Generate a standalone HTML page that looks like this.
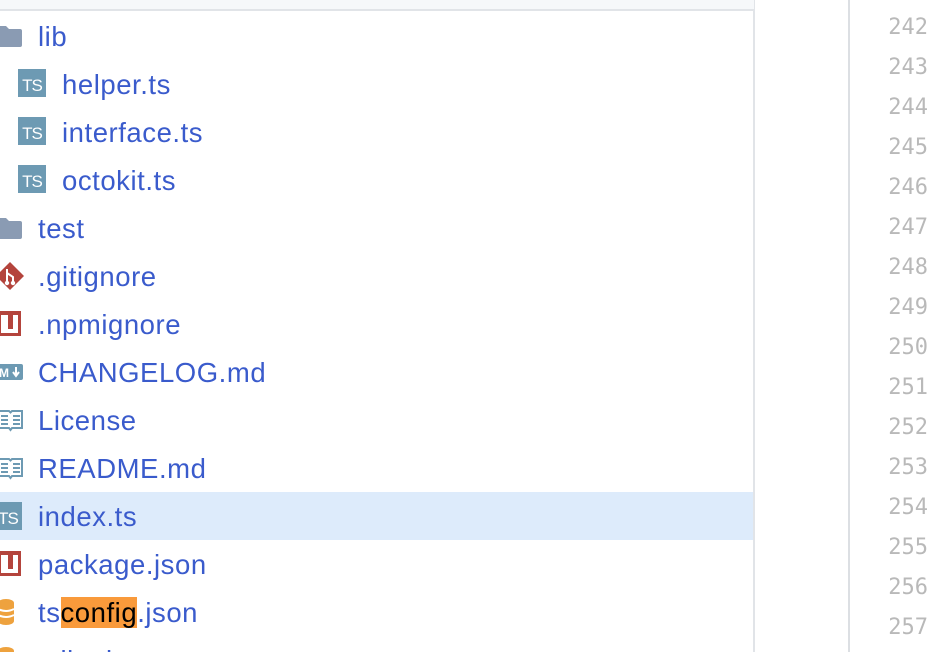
<!DOCTYPE html>
<html><head><meta charset="utf-8"><style>
*{margin:0;padding:0;box-sizing:border-box}
html,body{width:938px;height:652px;overflow:hidden}
body{background:#fff;font-family:"Liberation Sans",Helvetica,Arial,sans-serif}
#w{position:relative;width:938px;height:652px;overflow:hidden}
.top{position:absolute;left:0;top:0;width:754px;height:11px;background:#f6f8fa;border-bottom:2px solid #e1e4e8}
.panel{position:absolute;left:0;top:0;width:755px;height:652px;border-right:2px solid #e1e4e8}
.vline{position:absolute;left:848px;top:0;width:2px;height:652px;background:#dcdfe3}
.row{position:absolute;left:0;width:753px;height:48px;line-height:48px;font-size:27.5px;letter-spacing:0.55px;color:#3a5bcc;white-space:nowrap}
.row.sel{background:#ddebfb}
.ic{position:absolute;top:0}
.t{position:absolute;top:1px}
.hl{background:#f99a3b;color:#000}
.ln{position:absolute;right:10px;width:80px;text-align:right;font-family:"DejaVu Sans Mono",monospace;font-size:22px;color:#b9b9b9;height:40px;line-height:40px}
.ts{position:absolute;width:28px;height:28px;background:#6d9ab3;color:#fff;font-size:17px;line-height:34px;text-align:center;letter-spacing:-1px}
</style></head><body><div id="w">
<div class="panel"></div>
<div class="top"></div>
<div class="vline"></div>

<div class="row" style="top:12px"><svg class="ic" style="left:-4px;top:13px" width="27" height="22"><path d="M0 1h10l3 3h11a2 2 0 0 1 2 2v14a2 2 0 0 1-2 2H0z" fill="#8a9bb3"/></svg><span class="t" style="left:38px">lib</span></div>
<div class="row" style="top:60px"><div class="ts" style="left:18px;top:9px">TS</div><span class="t" style="left:62px">helper.ts</span></div>
<div class="row" style="top:108px"><div class="ts" style="left:18px;top:9px">TS</div><span class="t" style="left:62px">interface.ts</span></div>
<div class="row" style="top:156px"><div class="ts" style="left:18px;top:9px">TS</div><span class="t" style="left:62px">octokit.ts</span></div>
<div class="row" style="top:204px"><svg class="ic" style="left:-4px;top:13px" width="27" height="22"><path d="M0 1h10l3 3h11a2 2 0 0 1 2 2v14a2 2 0 0 1-2 2H0z" fill="#8a9bb3"/></svg><span class="t" style="left:38px">test</span></div>
<div class="row" style="top:252px"><svg class="ic" style="left:-5px;top:9px" width="30" height="30"><path d="M15 1L29 15 15 29 1 15z" fill="#b4443c"/><path d="M12 8v14M12 12l6 4v6" stroke="#fff" stroke-width="2" fill="none"/><circle cx="12" cy="22" r="2.2" fill="#fff"/><circle cx="18" cy="22" r="2.2" fill="#fff"/></svg><span class="t" style="left:38px">.gitignore</span></div>
<div class="row" style="top:300px"><svg class="ic" style="left:-2px;top:11px" width="24" height="26"><rect x="0" y="0" width="23" height="25" fill="#b4443c"/><rect x="3" y="4" width="17" height="18" fill="#fff"/><rect x="10" y="4" width="5" height="14" fill="#b4443c"/></svg><span class="t" style="left:38px">.npmignore</span></div>
<div class="row" style="top:348px"><svg class="ic" style="left:-2px;top:14px" width="26" height="20"><rect x="0" y="2" width="25" height="16" rx="2" fill="#6d9ab3"/><text x="1" y="15" font-size="12" font-weight="bold" fill="#fff" font-family="Liberation Sans">M</text><path d="M18 5v8M15 10l3 4 3-4" stroke="#fff" stroke-width="2" fill="none"/></svg><span class="t" style="left:38px">CHANGELOG.md</span></div>
<div class="row" style="top:396px"><svg class="ic" style="left:-2px;top:12px" width="26" height="24"><path d="M1 3h10l1.5 1.5L14 3h10v17H14l-1.5 2-1.5-2H1z" fill="none" stroke="#6d9ab3" stroke-width="2"/><path d="M3 8h7M3 12h7M3 16h7M15 8h7M15 12h7M15 16h7" stroke="#6d9ab3" stroke-width="2"/></svg><span class="t" style="left:38px">License</span></div>
<div class="row" style="top:444px"><svg class="ic" style="left:-2px;top:12px" width="26" height="24"><path d="M1 3h10l1.5 1.5L14 3h10v17H14l-1.5 2-1.5-2H1z" fill="none" stroke="#6d9ab3" stroke-width="2"/><path d="M3 8h7M3 12h7M3 16h7M15 8h7M15 12h7M15 16h7" stroke="#6d9ab3" stroke-width="2"/></svg><span class="t" style="left:38px">README.md</span></div>
<div class="row sel" style="top:492px"><div class="ts" style="left:-6px;top:10px">TS</div><span class="t" style="left:38px">index.ts</span></div>
<div class="row" style="top:540px"><svg class="ic" style="left:-2px;top:11px" width="24" height="26"><rect x="0" y="0" width="23" height="25" fill="#b4443c"/><rect x="3" y="4" width="17" height="18" fill="#fff"/><rect x="10" y="4" width="5" height="14" fill="#b4443c"/></svg><span class="t" style="left:38px">package.json</span></div>
<div class="row" style="top:588px"><svg class="ic" style="left:-2px;top:10px" width="20" height="28"><ellipse cx="8" cy="5" rx="8" ry="4" fill="#eea23e"/><rect x="0" y="5" width="16" height="18" fill="#eea23e"/><ellipse cx="8" cy="23" rx="8" ry="4" fill="#eea23e"/><path d="M0 11q8 4 16 0M0 17q8 4 16 0" stroke="#fff" stroke-width="2" fill="none"/></svg><span class="t" style="left:38px">ts<span class="hl">config</span>.json</span></div>
<div class="row" style="top:636px;height:16px;overflow:hidden"><svg class="ic" style="left:-2px;top:10px" width="20" height="28"><ellipse cx="8" cy="5" rx="8" ry="4" fill="#eea23e"/><rect x="0" y="5" width="16" height="18" fill="#eea23e"/></svg><span class="t" style="left:38px">tslint.json</span></div>

<div class="ln" style="top:8px">242</div>
<div class="ln" style="top:48px">243</div>
<div class="ln" style="top:88px">244</div>
<div class="ln" style="top:128px">245</div>
<div class="ln" style="top:168px">246</div>
<div class="ln" style="top:208px">247</div>
<div class="ln" style="top:248px">248</div>
<div class="ln" style="top:288px">249</div>
<div class="ln" style="top:328px">250</div>
<div class="ln" style="top:368px">251</div>
<div class="ln" style="top:408px">252</div>
<div class="ln" style="top:448px">253</div>
<div class="ln" style="top:488px">254</div>
<div class="ln" style="top:528px">255</div>
<div class="ln" style="top:568px">256</div>
<div class="ln" style="top:608px">257</div>
</div></body></html>
